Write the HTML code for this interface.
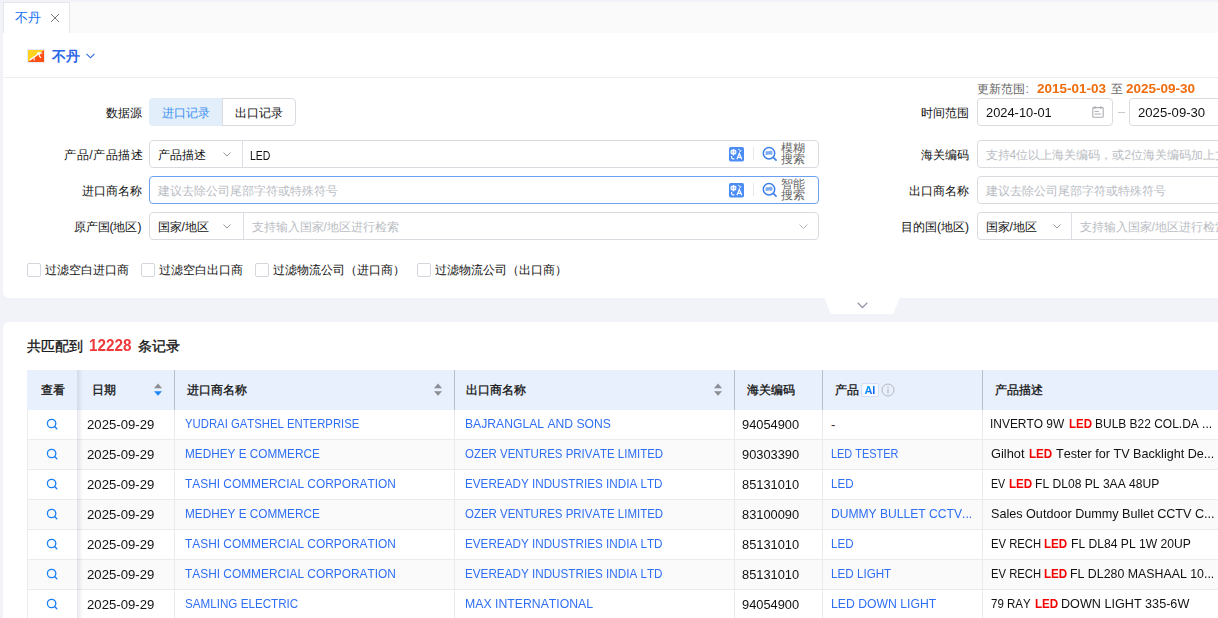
<!DOCTYPE html>
<html><head><meta charset="utf-8">
<style>
*{box-sizing:border-box;margin:0;padding:0}
html,body{width:1218px;height:618px;overflow:hidden}
body{position:relative;background:#f2f3f9;font-family:"Liberation Sans",sans-serif;color:#222}
.r{position:absolute}
.t{position:absolute;white-space:nowrap;line-height:20px;font-kerning:none}
</style></head><body>
<div class="r" style="left:3px;top:2px;width:1260px;height:31px;background:#fafafa"></div>
<div class="r" style="left:3px;top:2px;width:67px;height:32px;background:#fff;border:1px solid #e4e6eb;border-bottom:none"></div>
<div class="t" style="left:15.00px;top:8px;font-size:13px;color:#1470f5;">不丹</div>

<svg class="r" style="left:50px;top:13px" width="10" height="10" viewBox="0 0 10 10"><path d="M1 1L9 9M9 1L1 9" stroke="#7a7a7a" stroke-width="1"/></svg>
<div class="r" style="left:3px;top:33px;width:1260px;height:265px;background:#fff;border-radius:0 0 6px 6px"></div>
<div class="r" style="left:3px;top:322px;width:1260px;height:300px;background:#fff;border-radius:6px 6px 0 0"></div>
<svg class="r" style="left:27px;top:49px" width="18" height="14" viewBox="0 0 18 14"><rect x="0.5" y="0.5" width="17" height="13" fill="#fff" stroke="#e6ebf5"/><polygon points="1,1 17,1 1,13" fill="#ffd21f"/><polygon points="17,1 17,13 1,13" fill="#ff4f12"/><path d="M3.2 10.8L6.5 8.2L9.5 6.5" stroke="#fff" stroke-width="1.3" fill="none" stroke-linecap="round"/><ellipse cx="11.8" cy="4.6" rx="1.9" ry="1.5" fill="#fff"/><path d="M9.5 6.3L10.8 5.5M7 8.4L7.2 11M12.2 6.6L13.6 8.6M13.4 3.8L15 4.2" stroke="#fff" stroke-width="1.1" fill="none" stroke-linecap="round"/></svg>
<div class="t" style="left:51.50px;top:46px;font-size:14px;color:#2a66e8;font-weight:bold;">不丹</div>

<svg class="r" style="left:86px;top:53px" width="9" height="6" viewBox="0 0 9 6"><path d="M0.5 0.8L4.5 4.8L8.5 0.8" stroke="#2a66e8" stroke-width="1.1" fill="none"/></svg>
<div class="r" style="left:3px;top:77px;width:1215px;height:1px;background:#eceef3"></div>
<div class="t" style="left:-58.5px;width:200px;text-align:right;top:103px;font-size:12px;color:#111;">数据源</div>

<div class="r" style="left:149px;top:98px;width:74px;height:28px;background:#e2effb;border-radius:4px 0 0 4px"></div>
<div class="r" style="left:222px;top:98px;width:74px;height:28px;border:1px solid #d9dbe0;border-radius:0 4px 4px 0"></div>
<div class="t" style="left:161.50px;top:103px;font-size:12px;color:#3a8ef0;">进口记录</div>

<div class="t" style="left:234.50px;top:103px;font-size:12px;color:#111;">出口记录</div>

<div class="t" style="left:-56.400000000000006px;width:200px;text-align:right;top:145px;font-size:12px;color:#111;letter-spacing:0.6px">产品/产品描述</div>

<div class="t" style="left:-58.5px;width:200px;text-align:right;top:181px;font-size:12px;color:#111;">进口商名称</div>

<div class="t" style="left:-58.5px;width:200px;text-align:right;top:217px;font-size:12px;color:#111;">原产国(地区)</div>

<div class="r" style="left:149px;top:140px;width:670px;height:28px;border:1px solid #d9dbe0;border-radius:4px;background:#fff"></div>
<div class="r" style="left:242px;top:141px;width:1px;height:26px;background:#dcdfe6"></div>
<div class="t" style="left:157.50px;top:145px;font-size:12px;color:#111;">产品描述</div>

<svg class="r" style="left:223px;top:152px" width="8" height="5" viewBox="0 0 8 5"><path d="M0.5 0.5L4.0 4L7.5 0.5" stroke="#999" stroke-width="1" fill="none"/></svg>
<div class="t" style="left:249.94px;top:146px;font-size:12px;color:#111;transform:scaleX(0.8722);transform-origin:0 0;">LED</div>

<div class="r" style="left:149px;top:176px;width:670px;height:28px;border:1px solid #6d9ff0;border-radius:4px;background:#fff"></div>
<div class="t" style="left:157.50px;top:181px;font-size:12px;color:#b9bcc3;">建议去除公司尾部字符或特殊符号</div>

<div class="r" style="left:149px;top:212px;width:670px;height:28px;border:1px solid #d9dbe0;border-radius:4px;background:#fff"></div>
<div class="r" style="left:243px;top:213px;width:1px;height:26px;background:#dcdfe6"></div>
<div class="t" style="left:157.50px;top:217px;font-size:12px;color:#111;">国家/地区</div>

<svg class="r" style="left:223px;top:224px" width="8" height="5" viewBox="0 0 8 5"><path d="M0.5 0.5L4.0 4L7.5 0.5" stroke="#999" stroke-width="1" fill="none"/></svg>
<div class="t" style="left:251.50px;top:217px;font-size:12px;color:#b9bcc3;">支持输入国家/地区进行检索</div>

<svg class="r" style="left:799px;top:224px" width="9" height="5" viewBox="0 0 9 5"><path d="M0.5 0.5L4.5 4.5L8.5 0.5" stroke="#b5b5b5" stroke-width="1" fill="none"/></svg>
<svg class="r" style="left:729px;top:147px" width="15" height="15" viewBox="0 0 15 15"><rect width="15" height="14.5" rx="1.8" fill="#4b8df4"/><rect x="2.1" y="3.3" width="4.7" height="3.6" rx="0.8" stroke="#fff" stroke-width="1.1" fill="#a9c8fa"/><path d="M4.45 2v6.4" stroke="#fff" stroke-width="1.1"/><path d="M2.6 9v1.6c0 0.8 0.4 1.2 1.2 1.2h1.6" stroke="#fff" stroke-width="1.2" fill="none"/><path d="M7.9 12.2L10.3 6.4L12.7 12.2M8.8 10.4h3" stroke="#fff" stroke-width="1.2" fill="none"/><path d="M9 2.3c1.3 0.1 2.1 0.8 2.5 2.1M11.5 4.4l0.7-1M11.5 4.4l-1.1-0.4" stroke="#fff" stroke-width="0.9" fill="none"/></svg><div class="r" style="left:753px;top:147px;width:1px;height:13px;background:#e6e8ec"></div><svg class="r" style="left:762px;top:146px" width="16" height="16" viewBox="0 0 16 16"><circle cx="7" cy="7.2" r="5.7" stroke="#3b7de9" stroke-width="1.5" fill="none"/><path d="M3.6 5.3c1.2-0.5 2.5 0.3 3.5-0.1c1-0.4 2-0.6 3.3 0.1v3.1c-1.2 0.6-2.3 0.2-3.3 0.2c-1.1 0-2.2 0.6-3.5 0.3z" fill="#7eabf5"/><path d="M11.2 11.4L14.6 14.6" stroke="#3b7de9" stroke-width="1.6"/></svg><div class="t" style="left:781px;top:143px;font-size:12px;line-height:11px;color:#666">模糊<br>搜索</div>
<svg class="r" style="left:729px;top:183px" width="15" height="15" viewBox="0 0 15 15"><rect width="15" height="14.5" rx="1.8" fill="#4b8df4"/><rect x="2.1" y="3.3" width="4.7" height="3.6" rx="0.8" stroke="#fff" stroke-width="1.1" fill="#a9c8fa"/><path d="M4.45 2v6.4" stroke="#fff" stroke-width="1.1"/><path d="M2.6 9v1.6c0 0.8 0.4 1.2 1.2 1.2h1.6" stroke="#fff" stroke-width="1.2" fill="none"/><path d="M7.9 12.2L10.3 6.4L12.7 12.2M8.8 10.4h3" stroke="#fff" stroke-width="1.2" fill="none"/><path d="M9 2.3c1.3 0.1 2.1 0.8 2.5 2.1M11.5 4.4l0.7-1M11.5 4.4l-1.1-0.4" stroke="#fff" stroke-width="0.9" fill="none"/></svg><div class="r" style="left:753px;top:183px;width:1px;height:13px;background:#e6e8ec"></div><svg class="r" style="left:762px;top:182px" width="16" height="16" viewBox="0 0 16 16"><circle cx="7" cy="7.2" r="5.7" stroke="#3b7de9" stroke-width="1.5" fill="none"/><path d="M3.6 5.3c1.2-0.5 2.5 0.3 3.5-0.1c1-0.4 2-0.6 3.3 0.1v3.1c-1.2 0.6-2.3 0.2-3.3 0.2c-1.1 0-2.2 0.6-3.5 0.3z" fill="#7eabf5"/><path d="M11.2 11.4L14.6 14.6" stroke="#3b7de9" stroke-width="1.6"/></svg><div class="t" style="left:781px;top:179px;font-size:12px;line-height:11px;color:#666">智能<br>搜索</div>
<div class="r" style="left:27px;top:263px;width:14px;height:14px;border:1px solid #d4d7de;border-radius:2px;background:#fff"></div>
<div class="t" style="left:44.50px;top:260px;font-size:12px;color:#111;">过滤空白进口商</div>

<div class="r" style="left:141px;top:263px;width:14px;height:14px;border:1px solid #d4d7de;border-radius:2px;background:#fff"></div>
<div class="t" style="left:158.50px;top:260px;font-size:12px;color:#111;">过滤空白出口商</div>

<div class="r" style="left:255px;top:263px;width:14px;height:14px;border:1px solid #d4d7de;border-radius:2px;background:#fff"></div>
<div class="t" style="left:272.50px;top:260px;font-size:12px;color:#111;">过滤物流公司（进口商）</div>

<div class="r" style="left:417px;top:263px;width:14px;height:14px;border:1px solid #d4d7de;border-radius:2px;background:#fff"></div>
<div class="t" style="left:434.50px;top:260px;font-size:12px;color:#111;">过滤物流公司（出口商）</div>

<div class="t" style="left:976.50px;top:79px;font-size:12px;color:#666;">更新范围</div>

<div class="t" style="left:1025.40px;top:79px;font-size:12px;color:#777;">:</div>

<div class="t" style="left:1036.53px;top:79px;font-size:13px;color:#f06c0c;font-weight:bold;transform:scaleX(1.0369);transform-origin:0 0;">2015-01-03</div>

<div class="t" style="left:1110.50px;top:79px;font-size:12px;color:#666;">至</div>

<div class="t" style="left:1125.53px;top:79px;font-size:13px;color:#f06c0c;font-weight:bold;transform:scaleX(1.0379);transform-origin:0 0;">2025-09-30</div>

<div class="t" style="left:769px;width:200px;text-align:right;top:103px;font-size:12px;color:#111;">时间范围</div>

<div class="r" style="left:977px;top:98px;width:136px;height:28px;border:1px solid #d9dbe0;border-radius:4px;background:#fff"></div>
<div class="t" style="left:985.85px;top:103px;font-size:13px;color:#111;transform:scaleX(0.9891);transform-origin:0 0;">2024-10-01</div>

<svg class="r" style="left:1092px;top:106px" width="12" height="12" viewBox="0 0 12 12"><rect x="0.8" y="1.6" width="10.4" height="9.6" rx="0.6" stroke="#aaadb2" stroke-width="1.1" fill="none"/><path d="M3 0.2v2.6M8.7 0.2v2.6" stroke="#aaadb2" stroke-width="1.3"/><path d="M2.5 5.4h4.3M2.6 8h6.6" stroke="#aaadb2" stroke-width="1"/></svg>
<div class="r" style="left:1118px;top:112px;width:7px;height:1px;background:#c8cad0"></div>
<div class="r" style="left:1129px;top:98px;width:136px;height:28px;border:1px solid #d9dbe0;border-radius:4px;background:#fff"></div>
<div class="t" style="left:1137.74px;top:103px;font-size:13px;color:#111;transform:scaleX(1.0102);transform-origin:0 0;">2025-09-30</div>

<div class="t" style="left:769px;width:200px;text-align:right;top:145px;font-size:12px;color:#111;">海关编码</div>

<div class="t" style="left:769px;width:200px;text-align:right;top:181px;font-size:12px;color:#111;">出口商名称</div>

<div class="t" style="left:769px;width:200px;text-align:right;top:217px;font-size:12px;color:#111;">目的国(地区)</div>

<div class="r" style="left:977px;top:140px;width:300px;height:28px;border:1px solid #d9dbe0;border-radius:4px;background:#fff"></div>
<div class="t" style="left:985.50px;top:145px;font-size:12px;color:#b9bcc3;">支持4位以上海关编码，或2位海关编码加上文字</div>

<div class="r" style="left:977px;top:176px;width:300px;height:28px;border:1px solid #d9dbe0;border-radius:4px;background:#fff"></div>
<div class="t" style="left:985.50px;top:181px;font-size:12px;color:#b9bcc3;">建议去除公司尾部字符或特殊符号</div>

<div class="r" style="left:977px;top:212px;width:300px;height:28px;border:1px solid #d9dbe0;border-radius:4px;background:#fff"></div>
<div class="r" style="left:1071px;top:213px;width:1px;height:26px;background:#dcdfe6"></div>
<div class="t" style="left:985.50px;top:217px;font-size:12px;color:#111;">国家/地区</div>

<svg class="r" style="left:1053px;top:224px" width="8" height="5" viewBox="0 0 8 5"><path d="M0.5 0.5L4.0 4L7.5 0.5" stroke="#999" stroke-width="1" fill="none"/></svg>
<div class="t" style="left:1079.50px;top:217px;font-size:12px;color:#b9bcc3;">支持输入国家/地区进行检索</div>

<div class="r" style="left:824px;top:297px;width:76px;height:17px;background:#fff;clip-path:polygon(0 0,100% 0,91% 100%,9% 100%)"></div>
<svg class="r" style="left:857px;top:302px" width="11" height="7" viewBox="0 0 11 7"><path d="M0.7 0.7L5.5 5.5L10.3 0.7" stroke="#9496aa" stroke-width="1.25" fill="none"/></svg>
<div class="t" style="left:27.00px;top:336px;font-size:14px;color:#111;-webkit-text-stroke:0.3px #111;">共匹配到</div>

<div class="t" style="left:89.04px;top:336px;font-size:16px;color:#ee3a3a;font-weight:bold;transform:scaleX(0.9537);transform-origin:0 0;">12228</div>

<div class="t" style="left:137.50px;top:336px;font-size:14px;color:#111;-webkit-text-stroke:0.3px #111;">条记录</div>

<div class="r" style="left:27px;top:370px;width:1191px;height:40px;background:#e9f0fd"></div>
<div class="r" style="left:27px;top:410px;width:1191px;height:30px;background:#fff;border-bottom:1px solid #ebebeb"></div>
<div class="r" style="left:27px;top:440px;width:1191px;height:30px;background:#fafafa;border-bottom:1px solid #ebebeb"></div>
<div class="r" style="left:27px;top:470px;width:1191px;height:30px;background:#fff;border-bottom:1px solid #ebebeb"></div>
<div class="r" style="left:27px;top:500px;width:1191px;height:30px;background:#fafafa;border-bottom:1px solid #ebebeb"></div>
<div class="r" style="left:27px;top:530px;width:1191px;height:30px;background:#fff;border-bottom:1px solid #ebebeb"></div>
<div class="r" style="left:27px;top:560px;width:1191px;height:30px;background:#fafafa;border-bottom:1px solid #ebebeb"></div>
<div class="r" style="left:27px;top:590px;width:1191px;height:30px;background:#fff;border-bottom:1px solid #ebebeb"></div>
<div class="r" style="left:174px;top:410px;width:1px;height:210px;background:#ebebeb"></div>
<div class="r" style="left:454px;top:410px;width:1px;height:210px;background:#ebebeb"></div>
<div class="r" style="left:734px;top:410px;width:1px;height:210px;background:#ebebeb"></div>
<div class="r" style="left:822px;top:410px;width:1px;height:210px;background:#ebebeb"></div>
<div class="r" style="left:982px;top:410px;width:1px;height:210px;background:#ebebeb"></div>
<div class="r" style="left:27px;top:410px;width:1px;height:210px;background:#ebebeb"></div>
<svg class="r" style="left:46px;top:418px" width="12" height="12" viewBox="0 0 12 12"><circle cx="5.6" cy="5.5" r="4.2" stroke="#1b7ff5" stroke-width="1.3" fill="none"/><path d="M8.6 8.5L10.8 10.7" stroke="#1b7ff5" stroke-width="1.4" stroke-linecap="round"/></svg>
<div class="t" style="left:86.74px;top:415px;font-size:13px;color:#111;transform:scaleX(1.0118);transform-origin:0 0;">2025-09-29</div>

<div class="t" style="left:185.45px;top:414px;font-size:13px;color:#2f6ff3;transform:scaleX(0.8713);transform-origin:0 0;">YUDRAI GATSHEL ENTERPRISE</div>

<div class="t" style="left:464.80px;top:414px;font-size:13px;color:#2f6ff3;transform:scaleX(0.9353);transform-origin:0 0;">BAJRANGLAL AND SONS</div>

<div class="t" style="left:742.40px;top:415px;font-size:13px;color:#111;transform:scaleX(0.9873);transform-origin:0 0;">94054900</div>

<div class="t" style="left:830.92px;top:415px;font-size:13px;color:#333;">-</div>

<div class="t" style="left:990.30px;top:414px;font-size:13px;color:#111;transform:scaleX(0.9178);transform-origin:0 0;">INVERTO 9W</div>

<div class="t" style="left:1068.73px;top:414px;font-size:13px;color:#f40000;font-weight:bold;transform:scaleX(0.8867);transform-origin:0 0;">LED</div>

<div class="t" style="left:1095.02px;top:414px;font-size:13px;color:#111;transform:scaleX(0.9207);transform-origin:0 0;">BULB B22 COL.DA ...</div>

<svg class="r" style="left:46px;top:448px" width="12" height="12" viewBox="0 0 12 12"><circle cx="5.6" cy="5.5" r="4.2" stroke="#1b7ff5" stroke-width="1.3" fill="none"/><path d="M8.6 8.5L10.8 10.7" stroke="#1b7ff5" stroke-width="1.4" stroke-linecap="round"/></svg>
<div class="t" style="left:86.74px;top:445px;font-size:13px;color:#111;transform:scaleX(1.0118);transform-origin:0 0;">2025-09-29</div>

<div class="t" style="left:184.73px;top:444px;font-size:13px;color:#2f6ff3;transform:scaleX(0.9058);transform-origin:0 0;">MEDHEY E COMMERCE</div>

<div class="t" style="left:465.26px;top:444px;font-size:13px;color:#2f6ff3;transform:scaleX(0.8818);transform-origin:0 0;">OZER VENTURES PRIVATE LIMITED</div>

<div class="t" style="left:742.40px;top:445px;font-size:13px;color:#111;transform:scaleX(0.9873);transform-origin:0 0;">90303390</div>

<div class="t" style="left:830.60px;top:444px;font-size:13px;color:#2f6ff3;transform:scaleX(0.8406);transform-origin:0 0;">LED TESTER</div>

<div class="t" style="left:991.05px;top:444px;font-size:13px;color:#111;transform:scaleX(0.9876);transform-origin:0 0;">Gilhot</div>

<div class="t" style="left:1028.82px;top:444px;font-size:13px;color:#f40000;font-weight:bold;transform:scaleX(0.8949);transform-origin:0 0;">LED</div>

<div class="t" style="left:1056.42px;top:444px;font-size:13px;color:#111;transform:scaleX(0.9697);transform-origin:0 0;">Tester for TV Backlight De...</div>

<svg class="r" style="left:46px;top:478px" width="12" height="12" viewBox="0 0 12 12"><circle cx="5.6" cy="5.5" r="4.2" stroke="#1b7ff5" stroke-width="1.3" fill="none"/><path d="M8.6 8.5L10.8 10.7" stroke="#1b7ff5" stroke-width="1.4" stroke-linecap="round"/></svg>
<div class="t" style="left:86.74px;top:475px;font-size:13px;color:#111;transform:scaleX(1.0118);transform-origin:0 0;">2025-09-29</div>

<div class="t" style="left:185.43px;top:474px;font-size:13px;color:#2f6ff3;transform:scaleX(0.9155);transform-origin:0 0;">TASHI COMMERCIAL CORPORATION</div>

<div class="t" style="left:464.84px;top:474px;font-size:13px;color:#2f6ff3;transform:scaleX(0.8995);transform-origin:0 0;">EVEREADY INDUSTRIES INDIA LTD</div>

<div class="t" style="left:742.44px;top:475px;font-size:13px;color:#111;transform:scaleX(0.9865);transform-origin:0 0;">85131010</div>

<div class="t" style="left:830.55px;top:474px;font-size:13px;color:#2f6ff3;transform:scaleX(0.8898);transform-origin:0 0;">LED</div>

<div class="t" style="left:990.83px;top:474px;font-size:13px;color:#111;transform:scaleX(0.8201);transform-origin:0 0;">EV</div>

<div class="t" style="left:1009.12px;top:474px;font-size:13px;color:#f40000;font-weight:bold;transform:scaleX(0.8949);transform-origin:0 0;">LED</div>

<div class="t" style="left:1035.31px;top:474px;font-size:13px;color:#111;transform:scaleX(0.9300);transform-origin:0 0;">FL DL08 PL 3AA 48UP</div>

<svg class="r" style="left:46px;top:508px" width="12" height="12" viewBox="0 0 12 12"><circle cx="5.6" cy="5.5" r="4.2" stroke="#1b7ff5" stroke-width="1.3" fill="none"/><path d="M8.6 8.5L10.8 10.7" stroke="#1b7ff5" stroke-width="1.4" stroke-linecap="round"/></svg>
<div class="t" style="left:86.74px;top:505px;font-size:13px;color:#111;transform:scaleX(1.0118);transform-origin:0 0;">2025-09-29</div>

<div class="t" style="left:184.73px;top:504px;font-size:13px;color:#2f6ff3;transform:scaleX(0.9058);transform-origin:0 0;">MEDHEY E COMMERCE</div>

<div class="t" style="left:465.26px;top:504px;font-size:13px;color:#2f6ff3;transform:scaleX(0.8818);transform-origin:0 0;">OZER VENTURES PRIVATE LIMITED</div>

<div class="t" style="left:742.44px;top:505px;font-size:13px;color:#111;transform:scaleX(0.9865);transform-origin:0 0;">83100090</div>

<div class="t" style="left:830.51px;top:504px;font-size:13px;color:#2f6ff3;transform:scaleX(0.9302);transform-origin:0 0;">DUMMY BULLET CCTV...</div>

<div class="t" style="left:991.13px;top:504px;font-size:13px;color:#111;transform:scaleX(0.9703);transform-origin:0 0;">Sales Outdoor Dummy Bullet CCTV C...</div>

<svg class="r" style="left:46px;top:538px" width="12" height="12" viewBox="0 0 12 12"><circle cx="5.6" cy="5.5" r="4.2" stroke="#1b7ff5" stroke-width="1.3" fill="none"/><path d="M8.6 8.5L10.8 10.7" stroke="#1b7ff5" stroke-width="1.4" stroke-linecap="round"/></svg>
<div class="t" style="left:86.74px;top:535px;font-size:13px;color:#111;transform:scaleX(1.0118);transform-origin:0 0;">2025-09-29</div>

<div class="t" style="left:185.43px;top:534px;font-size:13px;color:#2f6ff3;transform:scaleX(0.9155);transform-origin:0 0;">TASHI COMMERCIAL CORPORATION</div>

<div class="t" style="left:464.84px;top:534px;font-size:13px;color:#2f6ff3;transform:scaleX(0.8995);transform-origin:0 0;">EVEREADY INDUSTRIES INDIA LTD</div>

<div class="t" style="left:742.44px;top:535px;font-size:13px;color:#111;transform:scaleX(0.9865);transform-origin:0 0;">85131010</div>

<div class="t" style="left:830.55px;top:534px;font-size:13px;color:#2f6ff3;transform:scaleX(0.8898);transform-origin:0 0;">LED</div>

<div class="t" style="left:990.77px;top:534px;font-size:13px;color:#111;transform:scaleX(0.8677);transform-origin:0 0;">EV RECH</div>

<div class="t" style="left:1044.12px;top:534px;font-size:13px;color:#f40000;font-weight:bold;transform:scaleX(0.8949);transform-origin:0 0;">LED</div>

<div class="t" style="left:1070.51px;top:534px;font-size:13px;color:#111;transform:scaleX(0.9317);transform-origin:0 0;">FL DL84 PL 1W 20UP</div>

<svg class="r" style="left:46px;top:568px" width="12" height="12" viewBox="0 0 12 12"><circle cx="5.6" cy="5.5" r="4.2" stroke="#1b7ff5" stroke-width="1.3" fill="none"/><path d="M8.6 8.5L10.8 10.7" stroke="#1b7ff5" stroke-width="1.4" stroke-linecap="round"/></svg>
<div class="t" style="left:86.74px;top:565px;font-size:13px;color:#111;transform:scaleX(1.0118);transform-origin:0 0;">2025-09-29</div>

<div class="t" style="left:185.43px;top:564px;font-size:13px;color:#2f6ff3;transform:scaleX(0.9155);transform-origin:0 0;">TASHI COMMERCIAL CORPORATION</div>

<div class="t" style="left:464.84px;top:564px;font-size:13px;color:#2f6ff3;transform:scaleX(0.8995);transform-origin:0 0;">EVEREADY INDUSTRIES INDIA LTD</div>

<div class="t" style="left:742.44px;top:565px;font-size:13px;color:#111;transform:scaleX(0.9865);transform-origin:0 0;">85131010</div>

<div class="t" style="left:830.54px;top:564px;font-size:13px;color:#2f6ff3;transform:scaleX(0.8964);transform-origin:0 0;">LED LIGHT</div>

<div class="t" style="left:990.77px;top:564px;font-size:13px;color:#111;transform:scaleX(0.8677);transform-origin:0 0;">EV RECH</div>

<div class="t" style="left:1044.12px;top:564px;font-size:13px;color:#f40000;font-weight:bold;transform:scaleX(0.8949);transform-origin:0 0;">LED</div>

<div class="t" style="left:1070.49px;top:564px;font-size:13px;color:#111;transform:scaleX(0.9506);transform-origin:0 0;">FL DL280 MASHAAL 10...</div>

<svg class="r" style="left:46px;top:598px" width="12" height="12" viewBox="0 0 12 12"><circle cx="5.6" cy="5.5" r="4.2" stroke="#1b7ff5" stroke-width="1.3" fill="none"/><path d="M8.6 8.5L10.8 10.7" stroke="#1b7ff5" stroke-width="1.4" stroke-linecap="round"/></svg>
<div class="t" style="left:86.74px;top:595px;font-size:13px;color:#111;transform:scaleX(1.0118);transform-origin:0 0;">2025-09-29</div>

<div class="t" style="left:185.17px;top:594px;font-size:13px;color:#2f6ff3;transform:scaleX(0.8960);transform-origin:0 0;">SAMLING ELECTRIC</div>

<div class="t" style="left:464.79px;top:594px;font-size:13px;color:#2f6ff3;transform:scaleX(0.9434);transform-origin:0 0;">MAX INTERNATIONAL</div>

<div class="t" style="left:742.40px;top:595px;font-size:13px;color:#111;transform:scaleX(0.9873);transform-origin:0 0;">94054900</div>

<div class="t" style="left:830.50px;top:594px;font-size:13px;color:#2f6ff3;transform:scaleX(0.9404);transform-origin:0 0;">LED DOWN LIGHT</div>

<div class="t" style="left:991.11px;top:594px;font-size:13px;color:#111;transform:scaleX(0.8848);transform-origin:0 0;">79 RAY</div>

<div class="t" style="left:1034.52px;top:594px;font-size:13px;color:#f40000;font-weight:bold;transform:scaleX(0.8949);transform-origin:0 0;">LED</div>

<div class="t" style="left:1061.07px;top:594px;font-size:13px;color:#111;transform:scaleX(0.9705);transform-origin:0 0;">DOWN LIGHT 335-6W</div>

<div class="r" style="left:77px;top:370px;width:6px;height:250px;background:linear-gradient(90deg,rgba(20,30,70,0.10),rgba(20,30,70,0))"></div>
<div class="r" style="left:174px;top:370px;width:1px;height:40px;background:#b9bdc5"></div>
<div class="r" style="left:454px;top:370px;width:1px;height:40px;background:#b9bdc5"></div>
<div class="r" style="left:734px;top:370px;width:1px;height:40px;background:#b9bdc5"></div>
<div class="r" style="left:822px;top:370px;width:1px;height:40px;background:#b9bdc5"></div>
<div class="r" style="left:982px;top:370px;width:1px;height:40px;background:#b9bdc5"></div>
<div class="t" style="left:40.50px;top:380px;font-size:12px;color:#111;-webkit-text-stroke:0.3px #111;">查看</div>

<div class="t" style="left:91.50px;top:380px;font-size:12px;color:#111;-webkit-text-stroke:0.3px #111;">日期</div>

<div class="t" style="left:186.50px;top:380px;font-size:12px;color:#111;-webkit-text-stroke:0.3px #111;">进口商名称</div>

<div class="t" style="left:466.00px;top:380px;font-size:12px;color:#111;-webkit-text-stroke:0.3px #111;">出口商名称</div>

<div class="t" style="left:746.50px;top:380px;font-size:12px;color:#111;-webkit-text-stroke:0.3px #111;">海关编码</div>

<div class="t" style="left:834.80px;top:380px;font-size:12px;color:#111;-webkit-text-stroke:0.3px #111;">产品</div>

<div class="t" style="left:994.50px;top:380px;font-size:12px;color:#111;-webkit-text-stroke:0.3px #111;">产品描述</div>

<svg class="r" style="left:154px;top:383px" width="8" height="14" viewBox="0 0 8 14"><path d="M0 5.2L4 0.6L8 5.2z" fill="#8a8d93"/><path d="M0 8.2L4 12.8L8 8.2z" fill="#1e88f5"/></svg>
<svg class="r" style="left:434px;top:383px" width="8" height="14" viewBox="0 0 8 14"><path d="M0 5.2L4 0.6L8 5.2z" fill="#8a8d93"/><path d="M0 8.2L4 12.8L8 8.2z" fill="#8a8d93"/></svg>
<svg class="r" style="left:714px;top:383px" width="8" height="14" viewBox="0 0 8 14"><path d="M0 5.2L4 0.6L8 5.2z" fill="#8a8d93"/><path d="M0 8.2L4 12.8L8 8.2z" fill="#8a8d93"/></svg>
<div class="r" style="left:861px;top:383px;width:18px;height:14px;border:1px solid #d3dcfb;border-radius:2px;background:#f6f9ff"></div>
<div class="t" style="left:864.5px;top:380px;font-size:11px;line-height:20px;font-weight:bold;color:#1a8cf0;letter-spacing:-0.3px;background:linear-gradient(135deg,#08c6e6 10%,#0a6cf5 60%,#0048ff);-webkit-background-clip:text;background-clip:text;-webkit-text-fill-color:transparent">AI</div>
<svg class="r" style="left:881px;top:383px" width="14" height="14" viewBox="0 0 14 14"><circle cx="7" cy="7" r="6" stroke="#b4b7bd" stroke-width="1" fill="none"/><circle cx="7" cy="4.2" r="0.8" fill="#b4b7bd"/><path d="M7 6v4.5" stroke="#b4b7bd" stroke-width="1.1"/></svg>
</body></html>
